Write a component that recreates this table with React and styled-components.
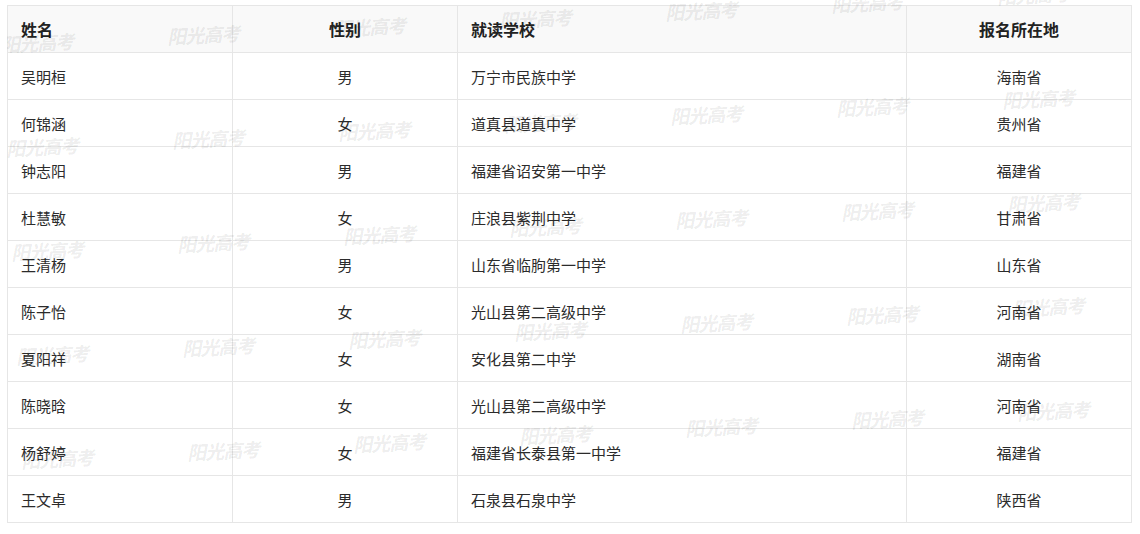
import React from 'react';
import styled, { createGlobalStyle } from 'styled-components';

const GlobalStyle = createGlobalStyle`
	body {
		margin: 0;
		background: #fff;
		font-family: "Noto Sans CJK SC", "Noto Sans", sans-serif;
	}
`;

const Page = styled.div`
	position: relative;
	overflow: hidden;
	margin-left: 7px;
	width: 1126px;
	padding-top: 5px;
	height: 529px;
`;

const Table = styled.table`
	width: 1125px;
	border-collapse: collapse;
	table-layout: fixed;
	font-size: 15px;
	color: #2b2b2b;
`;

const HeadCell = styled.th`
	height: 46px;
	padding: 0 13px;
	background: #f9f9f9;
	border: 1px solid #e6e6e6;
	font-size: 16px;
	font-weight: 600;
	color: #222;
	text-align: ${(p) => (p.$center ? 'center' : 'left')};
`;

const Cell = styled.td`
	height: 46px;
	padding: 0 13px;
	border: 1px solid #e6e6e6;
	text-align: ${(p) => (p.$center ? 'center' : 'left')};
`;

const Watermarks = styled.div`
	position: absolute;
	inset: 0;
	pointer-events: none;
`;

const Mark = styled.span.attrs((p) => ({
	style: { left: p.$x + 'px', top: p.$y + 'px' }
}))`
	position: absolute;
	transform: translate(-50%, -50%) rotate(-3deg);
	font-family: "Liberation Serif", "Noto Sans CJK SC", serif;
	font-style: italic;
	font-weight: 700;
	font-size: 19px;
	letter-spacing: -1px;
	white-space: nowrap;
	color: rgba(0, 0, 0, 0.085);
`;

const rows = [
	['吴明桓', '男', '万宁市民族中学', '海南省'],
	['何锦涵', '女', '道真县道真中学', '贵州省'],
	['钟志阳', '男', '福建省诏安第一中学', '福建省'],
	['杜慧敏', '女', '庄浪县紫荆中学', '甘肃省'],
	['王清杨', '男', '山东省临朐第一中学', '山东省'],
	['陈子怡', '女', '光山县第二高级中学', '河南省'],
	['夏阳祥', '女', '安化县第二中学', '湖南省'],
	['陈晓晗', '女', '光山县第二高级中学', '河南省'],
	['杨舒婷', '女', '福建省长泰县第一中学', '福建省'],
	['王文卓', '男', '石泉县石泉中学', '陕西省']
];

// watermark grid, tilted a little
const marks = [];
for (let r = 0; r < 5; r++) {
	for (let c = 0; c < 7; c++) {
		marks.push({ x: 30 + 166 * c + 5 * r, y: 42 - 8 * c + 104 * r });
	}
}

function App() {
	return (
		<Page>
			<GlobalStyle />
			<Table>
				<colgroup>
					<col style={{ width: 225 }} />
					<col style={{ width: 225 }} />
					<col style={{ width: 449 }} />
					<col style={{ width: 225 }} />
				</colgroup>
				<thead>
					<tr>
						<HeadCell>姓名</HeadCell>
						<HeadCell $center>性别</HeadCell>
						<HeadCell>就读学校</HeadCell>
						<HeadCell $center>报名所在地</HeadCell>
					</tr>
				</thead>
				<tbody>
					{rows.map((row) => (
						<tr key={row[0]}>
							<Cell>{row[0]}</Cell>
							<Cell $center>{row[1]}</Cell>
							<Cell>{row[2]}</Cell>
							<Cell $center>{row[3]}</Cell>
						</tr>
					))}
				</tbody>
			</Table>
			<Watermarks>
				{marks.map((m, i) => (
					<Mark key={i} $x={m.x} $y={m.y}>
						阳光高考
					</Mark>
				))}
			</Watermarks>
		</Page>
	);
}

export default App;
